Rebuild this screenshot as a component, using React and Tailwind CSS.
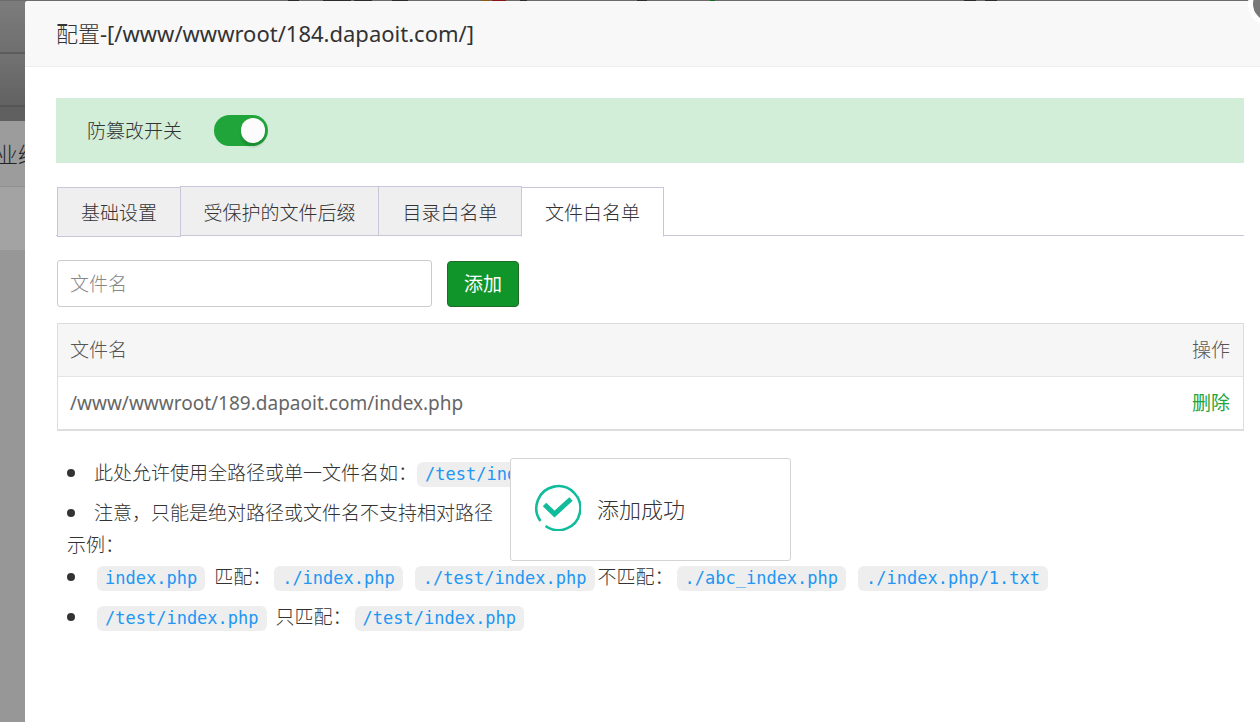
import React, { useState } from 'react'

const TABS = [
  { id: 'base', label: '基础设置', className: 'mt-px h-[50px] w-[124px] pt-0.5' },
  { id: 'suffix', label: '受保护的文件后缀', className: '-ml-px h-[50px] w-[199px] pt-1' },
  { id: 'dirs', label: '目录白名单', className: '-ml-px h-[50px] w-[144px] pt-1' },
  { id: 'files', label: '文件白名单', className: '-ml-px mt-px h-[50px] w-[143px] pt-0.5' },
]

const FILES = ['/www/wwwroot/189.dapaoit.com/index.php']

function Code({ children }) {
  return (
    <code className="mt-0.5 inline-block h-[25px] rounded-md bg-[#eee] px-2 font-['DejaVu_Sans_Mono',monospace] text-[17px] leading-[25px] font-normal text-[#2196f3]">
      {children}
    </code>
  )
}

function Bullet({ children }) {
  return (
    <li className="flex h-10 items-center">
      <span className="mr-[19px] size-2 shrink-0 rounded-full bg-[#333]" />
      {children}
    </li>
  )
}

function Switch({ id, checked, onChange }) {
  return (
    <span className="relative inline-flex h-[31px] w-[54px]">
      <input
        id={id}
        type="checkbox"
        role="switch"
        checked={checked}
        onChange={onChange}
        className="peer h-full w-full cursor-pointer appearance-none rounded-full bg-gray-300 checked:bg-[#20a53a]"
      />
      <span className="pointer-events-none absolute top-[3px] left-[3px] h-[25px] w-6 rounded-full bg-[#fcfcfc] shadow-[0_4px_3px_rgba(0,0,0,0.15)] peer-checked:left-[27px]" />
    </span>
  )
}

// Dimmed page behind the dialog
function Backdrop() {
  return (
    <div className="flex min-h-screen flex-col bg-[#979797]">
      <div className="h-[54px] border-b-2 border-[#5c5c5c] bg-linear-to-b from-[#7c7c7c] to-[#6f6f6f]">
        <svg className="block h-px w-full" fill="#2c2a2c">
          <rect width="1260" height="1" fill="#6e6a6b" />
          <rect x="288" width="11" height="1" />
          <rect x="323" width="28" height="1" />
          <rect x="354" width="18" height="1" />
          <rect x="392" width="16" height="1" />
          <rect x="481" width="9" height="1" fill="#8a5a10" />
          <rect x="492" width="14" height="1" fill="#8c1616" />
          <rect x="520" width="7" height="1" />
          <rect x="637" width="10" height="1" />
          <rect x="710" width="5" height="1" fill="#0c6b1c" />
          <rect x="964" width="12" height="1" />
          <rect x="985" width="12" height="1" />
        </svg>
      </div>
      <div className="h-[53px] border-b-2 border-[#565656] bg-linear-to-b from-[#727272] to-[#626262]" />
      <div className="h-[14px] bg-[#606060]" />
      <div className="h-[66px] border-b border-[#8f8f8f] bg-[#9c9c9c] text-[22px] leading-[66px] whitespace-nowrap text-[#222]">
        <span className="-ml-1">业级</span>
      </div>
      <div className="h-[63px] bg-[#a3a3a3]" />
    </div>
  )
}

function Toast({ children }) {
  return (
    <div
      role="status"
      className="absolute top-[457px] left-[485px] flex h-[103px] w-[281px] items-center rounded-[3px] border border-[#d3d4d3] bg-white pl-[22px] text-[22px]"
    >
      <svg className="mr-4 mb-1.5 size-12" viewBox="0 0 48 48" fill="none" stroke="#10bc9c">
        <path d="M12.500 43A22 22 0 1 0 7.500 38" strokeWidth="2.6" />
        <path d="M11.500 21.500L21.500 31L38 16" strokeWidth="5" />
      </svg>
      <span>{children}</span>
    </div>
  )
}

export default function App() {
  const [enabled, setEnabled] = useState(true)
  const [active, setActive] = useState('files')

  return (
    <div className="relative min-h-screen overflow-hidden font-['Noto_Sans','Noto_Sans_CJK_SC',sans-serif] text-[19px] font-light text-[#333]">
      <Backdrop />

      <div role="dialog" aria-labelledby="title" className="absolute top-px right-0 bottom-0 left-[25px] rounded-tl-[3px] bg-white">
        <header className="h-[66px] rounded-tl-[3px] border-b border-[#eee] bg-[#f8f8f8] px-[31px]">
          <h1 id="title" className="text-[22px] leading-[65px]">
            配置<span className="font-normal">-[/www/wwwroot/184.dapaoit.com/]</span>
          </h1>
        </header>
        <button
          type="button"
          aria-label="关闭"
          className="absolute -top-[19px] -right-8 size-11 rounded-full border-[5px] border-white bg-[#787878]"
        />

        <main className="pt-[31px] pr-4 pl-[31px]">
          <div className="flex h-[65px] items-center gap-8 bg-[#d2edd8] px-[31px]">
            <label htmlFor="guard" className="pt-0.5">防篡改开关</label>
            <Switch id="guard" checked={enabled} onChange={() => setEnabled(!enabled)} />
          </div>

          <div role="tablist" className="mt-[23px] flex h-[50px] items-start border-b border-[#c8c6d4] pl-px">
            {TABS.map((tab) => (
              <button
                key={tab.id}
                type="button"
                role="tab"
                aria-selected={active === tab.id}
                onClick={() => setActive(tab.id)}
                className={`${tab.className} border border-[#c8c6d8] ${active === tab.id ? 'border-b-white bg-white' : 'bg-[#efefef]'}`}
              >
                {tab.label}
              </button>
            ))}
          </div>

          <form className="mt-6 flex items-center gap-[15px] pl-px" onSubmit={(e) => e.preventDefault()}>
            <input
              type="text"
              aria-label="文件名"
              placeholder="文件名"
              className="h-[47px] w-[375px] rounded-[3px] border border-[#ccc] px-3 placeholder:text-[#888]"
            />
            <button type="submit" className="h-[46px] w-[72px] rounded-[4px] border border-[#1d6b27] bg-[#10952a] pt-0.5 font-normal text-white">
              添加
            </button>
          </form>

          <div className="mt-4 ml-px border border-b-2 border-[#ddd] text-[#666]">
            <table className="w-full">
              <thead>
                <tr className="h-[52px] border-b border-[#e4e4e4] bg-[#f6f6f6]">
                  <th className="px-3 text-left font-light text-[#555]">文件名</th>
                  <th className="px-[13px] text-right font-light text-[#555]">操作</th>
                </tr>
              </thead>
              <tbody>
                {FILES.map((file) => (
                  <tr key={file} className="h-[53px]">
                    <td className="px-3 font-normal">{file}</td>
                    <td className="px-[13px] text-right font-normal">
                      <a href="#delete" className="text-[#20a53a]">删除</a>
                    </td>
                  </tr>
                ))}
              </tbody>
            </table>
          </div>

          <ul className="mt-[22px] pl-[11px] whitespace-nowrap">
            <Bullet>
              此处允许使用全路径或单一文件名如：
              <Code>/test/index.php</Code>
            </Bullet>
            <Bullet>注意，只能是绝对路径或文件名不支持相对路径</Bullet>
          </ul>
          <p className="pl-[11px] leading-6">示例：</p>
          <ul className="pl-[11px] whitespace-nowrap">
            <Bullet>
              <div className="ml-[3px] flex items-center">
                <Code>index.php</Code>
                <span className="mr-[3px] ml-[9px]">匹配：</span>
                <Code>./index.php</Code>
                <span className="w-3" />
                <Code>./test/index.php</Code>
                <span className="mx-[3px]">不匹配：</span>
                <Code>./abc_index.php</Code>
                <span className="w-3" />
                <Code>./index.php/1.txt</Code>
              </div>
            </Bullet>
            <Bullet>
              <div className="ml-[3px] flex items-center">
                <Code>/test/index.php</Code>
                <span className="mr-[3px] ml-[9px]">只匹配：</span>
                <Code>/test/index.php</Code>
              </div>
            </Bullet>
          </ul>
        </main>

        <Toast>添加成功</Toast>
      </div>
    </div>
  )
}
